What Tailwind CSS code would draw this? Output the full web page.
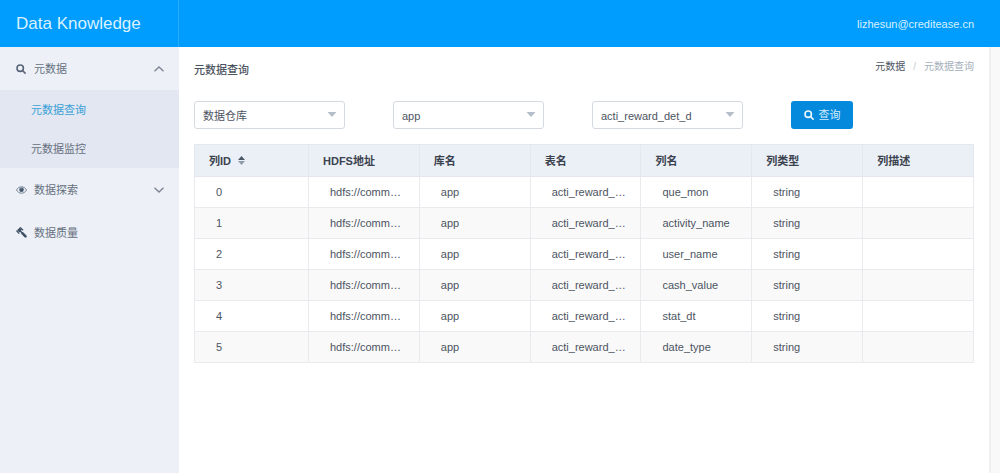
<!DOCTYPE html>
<html lang="zh-CN">
<head>
<meta charset="utf-8">
<meta name="viewport" content="width=device-width, initial-scale=1">
<title>Data Knowledge</title>
<script src="https://cdn.jsdelivr.net/npm/@tailwindcss/browser@4"></script>
</head>
<body class="flex h-screen flex-col overflow-hidden bg-white font-['Liberation_Sans','Noto_Sans_CJK_SC',sans-serif] text-[11px] leading-4 text-[#4c5461]">
<header class="flex h-[47px] shrink-0 items-center bg-[#009dff] text-[#d9f1ff]">
  <h1 class="flex h-full w-[179px] items-center border-r border-[#2aadff] pl-4 text-[17px]">Data Knowledge</h1>
  <a href="#" class="mr-[26px] ml-auto">lizhesun@creditease.cn</a>
</header>
<div class="flex min-h-0 flex-1">
  <nav class="w-[179px] shrink-0 bg-[#edf0f7] text-[#667080]">
    <button type="button" aria-expanded="true" class="flex h-[43px] w-full items-center pr-[15px] pl-4">
      <svg class="size-[10px]" viewBox="0 0 10 10" fill="none" stroke="#586477" stroke-width="1.6" stroke-linecap="round"><circle cx="4.2" cy="4.2" r="3.2"/><path d="M6.7 6.7 9.1 9.1"/></svg>
      <span class="ml-2">元数据</span>
      <svg class="ml-auto h-[6px] w-[10px]" viewBox="0 0 10 6" fill="none" stroke="#7d8694" stroke-width="1.4"><path d="M.5 5.2 5 1l4.5 4.2"/></svg>
    </button>
    <ul class="bg-[#e3e7f1]">
      <li><a href="#" class="flex h-[39px] items-center pl-[31px] text-[#38a0d6]">元数据查询</a></li>
      <li><a href="#" class="flex h-[39px] items-center pl-[31px]">元数据监控</a></li>
    </ul>
    <button type="button" aria-expanded="false" class="flex h-[43px] w-full items-center pr-[15px] pl-4">
      <svg class="h-[8px] w-[11px]" viewBox="0 0 11 8"><path d="M.5 4C1.8 1.8 3.400.8 5.5.8S9.200 1.800 10.500 4C9.200 6.200 7.600 7.200 5.500 7.200S1.800 6.200.5 4Z" fill="#edf0f7" stroke="#66788b" stroke-width=".9"/><circle cx="5.500" cy="3.700" r="2.300" fill="#43566a"/><path d="M4.300 3.300A1.300 1.300 0 0 1 5.500 2.300" fill="none" stroke="#c6d0da" stroke-width=".5"/></svg>
      <span class="ml-[7px]">数据探索</span>
      <svg class="ml-auto h-[6px] w-[10px]" viewBox="0 0 10 6" fill="none" stroke="#7d8694" stroke-width="1.4"><path d="M.5.8 5 5 9.5.8"/></svg>
    </button>
    <a href="#" class="flex h-[43px] items-center pl-4">
      <svg class="size-[11px]" viewBox="0 0 11 11" fill="none" stroke="#3f5265" stroke-linecap="round"><path d="M2.200 4.300 4.800 1.700" stroke-width="3.200" stroke-linecap="butt"/><path d="M.7 4 3 6.300M4.500.7 6.800 3" stroke-width="1.100"/><path d="M4.500 4.200 6 5.700" stroke-width="1.500"/><path d="M6.600 6.400 9.500 9.300" stroke-width="2.600"/></svg>
      <span class="ml-[7px]">数据质量</span>
    </a>
  </nav>
  <main class="min-w-0 flex-1 pr-[15px] pl-[15px]">
    <div class="flex h-[54px] items-start justify-between">
      <h2 class="pt-[15px] font-medium">元数据查询</h2>
      <nav aria-label="breadcrumb" class="flex pt-3 text-[10px]">
        <a href="#">元数据</a><span class="mx-2 text-[#c5cbd3]">/</span><span class="text-[#a5afbb]">元数据查询</span>
      </nav>
    </div>
    <form class="flex gap-12">
      <div class="relative w-[151px]">
        <select aria-label="数据源" class="block h-7 w-full appearance-none rounded-[3px] border border-[#d5dae0] bg-white pt-px pl-2"><option>数据仓库</option></select>
        <svg class="pointer-events-none absolute top-[11px] right-2 h-[5px] w-[10px]" viewBox="0 0 10 5" fill="#b5bfca"><path d="M.5 0h9L5 5Z"/></svg>
      </div>
      <div class="relative w-[151px]">
        <select aria-label="库名" class="block h-7 w-full appearance-none rounded-[3px] border border-[#d5dae0] bg-white pt-px pl-2"><option>app</option></select>
        <svg class="pointer-events-none absolute top-[11px] right-2 h-[5px] w-[10px]" viewBox="0 0 10 5" fill="#b5bfca"><path d="M.5 0h9L5 5Z"/></svg>
      </div>
      <div class="relative w-[151px]">
        <select aria-label="表名" class="block h-7 w-full appearance-none rounded-[3px] border border-[#d5dae0] bg-white pt-px pl-2"><option>acti_reward_det_d</option></select>
        <svg class="pointer-events-none absolute top-[11px] right-2 h-[5px] w-[10px]" viewBox="0 0 10 5" fill="#b5bfca"><path d="M.5 0h9L5 5Z"/></svg>
      </div>
      <button type="button" class="flex h-7 w-[62px] items-center justify-center gap-[5px] rounded-[3px] bg-[#0489dc] text-[#d3ecfb]">
        <svg class="size-[10px]" viewBox="0 0 10 10" fill="none" stroke="#f0f9ff" stroke-width="1.6" stroke-linecap="round"><circle cx="4.2" cy="4.2" r="3.2"/><path d="M6.7 6.7 9.1 9.1"/></svg>
        查询
      </button>
    </form>
    <table class="mt-[15px] w-full table-fixed border-collapse text-left [&_td]:border [&_td]:border-[#e8eaed] [&_td]:pl-[21px] [&_th]:border [&_th]:border-[#e4e8ee] [&_th]:pl-[14px] [&_tbody_tr]:h-[31px] [&_tbody_tr:nth-child(even)]:bg-[#f9f9fa]">
      <colgroup><col class="w-[114px]"><col><col><col><col><col><col></colgroup>
      <thead>
        <tr class="h-8 bg-[#ebeff6] text-[#3b434f]">
          <th scope="col"><button type="button" class="flex items-center gap-[7px]">列ID
            <svg class="h-[9px] w-[7px]" viewBox="0 0 7 9"><path d="M0 4 3.5 0 7 4Z" fill="#4b5967"/><path d="M0 5h7L3.5 9Z" fill="#8d9baa"/></svg></button></th>
          <th scope="col">HDFS地址</th><th scope="col">库名</th><th scope="col">表名</th><th scope="col">列名</th><th scope="col">列类型</th><th scope="col">列描述</th>
        </tr>
      </thead>
      <tbody>
        <tr><td>0</td><td>hdfs://comm…</td><td>app</td><td>acti_reward_…</td><td>que_mon</td><td>string</td><td></td></tr>
        <tr><td>1</td><td>hdfs://comm…</td><td>app</td><td>acti_reward_…</td><td>activity_name</td><td>string</td><td></td></tr>
        <tr><td>2</td><td>hdfs://comm…</td><td>app</td><td>acti_reward_…</td><td>user_name</td><td>string</td><td></td></tr>
        <tr><td>3</td><td>hdfs://comm…</td><td>app</td><td>acti_reward_…</td><td>cash_value</td><td>string</td><td></td></tr>
        <tr><td>4</td><td>hdfs://comm…</td><td>app</td><td>acti_reward_…</td><td>stat_dt</td><td>string</td><td></td></tr>
        <tr><td>5</td><td>hdfs://comm…</td><td>app</td><td>acti_reward_…</td><td>date_type</td><td>string</td><td></td></tr>
      </tbody>
    </table>
  </main>
  <div class="w-[11px] shrink-0 border-l-2 border-[#f0f0f0] bg-[#f9f9f9]"></div>
</div>
</body>
</html>
